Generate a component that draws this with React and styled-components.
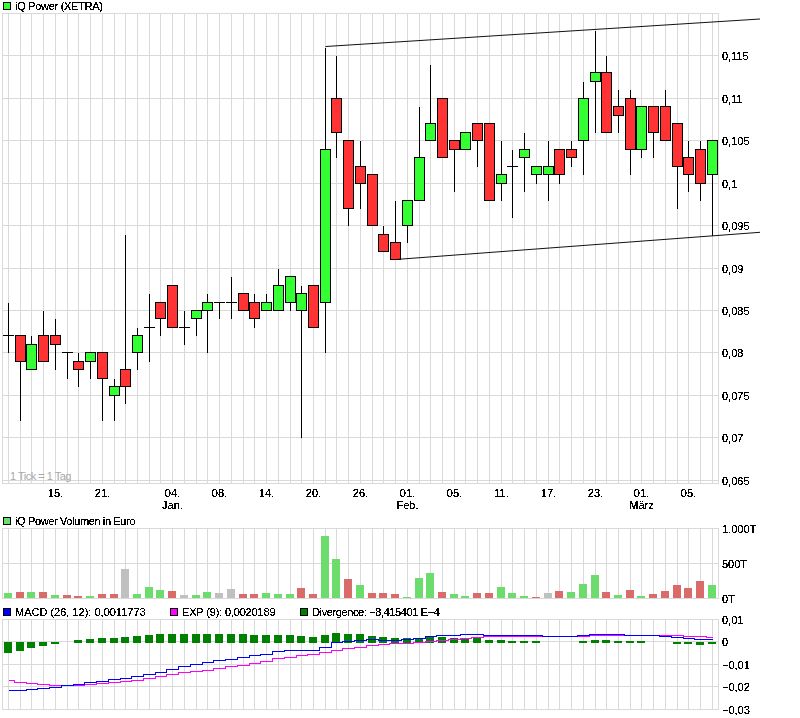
import React from 'react';
import styled, { createGlobalStyle } from 'styled-components';

const GlobalStyle = createGlobalStyle`
  html, body { margin: 0; padding: 0; background: #fff; }
`;

const Page = styled.div`
  width: 800px;
  height: 718px;
  display: flex;
  flex-direction: column;
  background: #fff;
  font-family: "Liberation Sans", Arial, sans-serif;
  font-size: 11px;
  color: #000;
  overflow: hidden;
`;

const Legend = styled.div`
  height: ${p => p.$height}px;
  padding-left: 3px;
  display: flex;
  align-items: flex-start;
  flex: none;
`;

const LegendItem = styled.div`
  display: flex;
  align-items: flex-start;
  width: ${p => (p.$width ? `${p.$width}px` : 'auto')};
  padding-top: ${p => p.$top}px;
  line-height: 10px;
  white-space: nowrap;
`;

const Swatch = styled.span`
  box-sizing: border-box;
  width: 8px;
  height: 8px;
  margin-right: 4px;
  border: 1px solid #000;
  background: ${p => p.$color};
  flex: none;
`;

const LegendText = styled.span`
  margin-top: -1px;
  letter-spacing: ${p => p.$spacing || 0}px;
  filter: url(#aliased);
`;

const Plot = styled.svg`
  display: block;
  flex: none;
  width: 800px;
  height: ${p => p.$height}px;
  overflow: visible;
`;

const Defs = styled.svg`
  position: absolute;
  width: 0;
  height: 0;
`;

const GridLine = styled.line`
  stroke: #d9d9d9;
  stroke-width: 1;
  shape-rendering: crispEdges;
`;

const Wick = styled.line`
  stroke: #000;
  stroke-width: 1;
  shape-rendering: crispEdges;
`;

const Body = styled.rect`
  fill: ${p => (p.$up ? '#33ff33' : '#ff3333')};
  stroke: #000;
  stroke-width: 1;
  shape-rendering: crispEdges;
`;

const ChannelLine = styled.line`
  stroke: #111;
  stroke-width: 1;
`;

const VolumeBar = styled.rect`
  fill: ${p => p.$color};
  shape-rendering: crispEdges;
`;

const DivergenceBar = styled.rect`
  fill: #008000;
  shape-rendering: crispEdges;
`;

const StepLine = styled.path`
  fill: none;
  stroke: ${p => p.$color};
  stroke-width: 1;
  shape-rendering: crispEdges;
`;

const AxisLabel = styled.text`
  font-family: "Liberation Sans", Arial, sans-serif;
  font-size: 11px;
  fill: #000;
  filter: url(#aliased);
`;

const Watermark = styled.text`
  font-family: "Liberation Sans", Arial, sans-serif;
  font-size: 11px;
  letter-spacing: -0.5px;
  fill: #a8a8a8;
`;

const count = 61;
const colX = i => Math.floor(8.5 + 11.73 * i) + 0.5;
const allX = Array.from({ length: count }, (_, i) => colX(i));
const priceY = p => Math.floor(55.8 + (115 - p) * 8.49) + 0.5;

// [high, top of body, bottom of body, low, up?]
const candles = [
  [86, 82, 82, 80, 0], [82, 82, 79, 72, 0], [82, 81, 78, 78, 1], [85, 82, 79, 79, 0], [84, 82, 81, 78, 0],
  [80, 80, 80, 77, 0], [80, 79, 78, 76, 0], [80, 80, 79, 77, 1], [80, 80, 77, 72, 0], [77, 76, 75, 72, 1],
  [94, 78, 76, 74, 0], [83, 82, 80, 78, 1], [87, 83, 83, 79, 0], [86, 86, 84, 82, 0], [88, 88, 83, 83, 0],
  [85, 83, 83, 81, 0], [85, 85, 84, 82, 1], [87, 86, 85, 80, 1], [86, 86, 86, 84, 0], [89, 86, 86, 84, 0],
  [87, 87, 85, 85, 0], [87, 86, 84, 83, 0], [87, 86, 85, 85, 1], [90, 88, 85, 85, 1], [89, 89, 86, 85, 1],
  [88, 87, 85, 70, 1], [88, 88, 83, 83, 0], [116, 104, 86, 80, 1], [115, 110, 106, 103, 0], [105, 105, 97, 95, 0],
  [105, 102, 100, 97, 0], [101, 101, 95, 95, 0], [95, 94, 92, 92, 0], [98, 93, 91, 91, 0], [98, 98, 95, 93, 1],
  [109, 103, 98, 98, 1], [114, 107, 105, 105, 1], [110, 110, 103, 103, 0], [105, 105, 104, 99, 0], [106, 106, 104, 104, 1],
  [107, 107, 105, 102, 0], [107, 107, 98, 98, 0], [105, 101, 100, 98, 1], [104, 102, 102, 96, 0], [106, 104, 103, 99, 1],
  [102, 102, 101, 100, 1], [105, 102, 101, 98, 1], [104, 104, 101, 100, 0], [105, 104, 103, 102, 0], [112, 110, 105, 101, 1],
  [118, 113, 112, 106, 1], [115, 113, 106, 106, 0], [111, 109, 108, 106, 0], [111, 110, 104, 101, 0], [109, 109, 104, 103, 1],
  [109, 109, 106, 103, 0], [111, 109, 105, 105, 0], [107, 107, 102, 97, 0], [105, 103, 101, 99, 0], [105, 104, 100, 98, 0],
  [105, 105, 101, 93.8, 1],
];

const V = { g: '#6cdc6c', r: '#d96b6b', y: '#c0c0c0' };
// top of each volume bar, in crop units (3 per pixel) above the 264 baseline
const volumes = [
  [249, 'g'], [246, 'r'], [246, 'g'], [246, 'r'], [255, 'g'], [255, 'r'], [258, 'r'], [258, 'g'], [252, 'r'], [252, 'r'],
  [177, 'y'], [252, 'g'], [231, 'g'], [240, 'g'], [243, 'r'], [255, 'y'], [255, 'g'], [246, 'g'], [249, 'y'], [237, 'y'],
  [252, 'r'], [252, 'r'], [249, 'g'], [252, 'g'], [252, 'g'], [234, 'r'], [252, 'r'], [78, 'g'], [147, 'g'], [207, 'r'],
  [225, 'g'], [249, 'r'], [249, 'r'], [252, 'r'], [261, 'g'], [204, 'g'], [189, 'g'], [246, 'r'], [252, 'g'], [258, 'g'],
  [249, 'r'], [249, 'r'], [231, 'g'], [249, 'g'], [258, 'g'], [261, 'r'], [249, 'y'], [243, 'r'], [246, 'g'], [222, 'g'],
  [195, 'g'], [246, 'r'], [255, 'g'], [240, 'r'], [258, 'g'], [252, 'r'], [243, 'r'], [225, 'r'], [234, 'r'], [213, 'r'],
  [225, 'g'],
];

// [top, bottom] in crop units; offset 510 + v / 3
const divergence = [
  [396, 429], [396, 423], [396, 414], [396, 408], [396, 402], null, [390, 399], [387, 399], [384, 399], [384, 399],
  [381, 399], [378, 399], [375, 399], [372, 399], [372, 399], [372, 399], [372, 399], [372, 399], [372, 399], [372, 399],
  [372, 399], [375, 399], [375, 399], [375, 399], [375, 399], [378, 399], [381, 399], [375, 399], [369, 399], [372, 399],
  [372, 399], [378, 399], [381, 399], [384, 399], [384, 399], [384, 399], [381, 399], [381, 399], [384, 399], [384, 399],
  [381, 399], [390, 399], [390, 399], [393, 399], [393, 399], [393, 399], null, null, null, [393, 399],
  [390, 399], [390, 399], [393, 399], [393, 399], [393, 399], null, null, [396, 402], [396, 402], [396, 405],
  [396, 402],
];

const macd = [
  541, 541, 538, 535, 532, 526, 523, 517, 514, 508, 505, 499, 493, 487, 478, 469, 463, 457, 451, 448, 442, 436, 432,
  424, 421, 421, 421, 412, 397, 394, 391, 388, 391, 391, 388, 385, 379, 376, 376, 373, 373, 377, 377, 377, 377, 376,
  379, 379, 379, 377, 373, 373, 373, 376, 376, 376, 379, 382, 385, 388, 388,
];
const signal = [
  511, 517, 520, 523, 526, 526, 526, 523, 520, 517, 514, 511, 505, 499, 493, 487, 484, 481, 475, 469, 466, 460, 454,
  445, 442, 436, 433, 427, 421, 415, 412, 406, 403, 400, 400, 397, 394, 391, 388, 385, 382, 379, 379, 379, 379, 379,
  379, 379, 379, 379, 376, 376, 376, 376, 376, 376, 376, 376, 379, 379, 382,
];

const cropY = v => Math.floor(510 + v / 3);

const stepPath = values => {
  let d = `M${colX(0)} ${cropY(values[0]) + 0.5}`;
  for (let i = 1; i < values.length; i++) {
    const mid = Math.floor((colX(i - 1) + colX(i)) / 2) + 0.5;
    d += `H${mid}V${cropY(values[i]) + 0.5}`;
  }
  return `${d}H${colX(values.length - 1)}`;
};

const priceLabels = [
  ['0,115', 115], ['0,11', 110], ['0,105', 105], ['0,1', 100], ['0,095', 95], ['0,09', 90],
  ['0,085', 85], ['0,08', 80], ['0,075', 75], ['0,07', 70], ['0,065', 65],
];
const dayLabels = [
  ['15.', 4], ['21.', 8], ['04.', 14], ['08.', 18], ['14.', 22], ['20.', 26], ['26.', 30],
  ['01.', 34], ['05.', 38], ['11.', 42], ['17.', 46], ['23.', 50], ['01.', 54], ['05.', 58],
];
const monthLabels = [['Jan.', 14], ['Feb.', 34], ['März', 54]];

const Frame = ({ top, bottom, lines }) => (
  <g>
    {[2.5, ...allX, 718.5].map(x => <GridLine key={x} x1={x} x2={x} y1={top} y2={bottom} />)}
    {lines.map(y => <GridLine key={y} x1={2} x2={719} y1={y} y2={y} />)}
  </g>
);

const PriceChart = () => (
  <Plot $height={503} viewBox="0 13 800 503">
    <Frame top={13} bottom={483.5} lines={[13.5, ...priceLabels.map(([, p]) => priceY(p)), 483.5]} />
    <Watermark x={10} y={480}>1 Tick = 1 Tag</Watermark>
    {candles.map(([h, t, b, l, up], i) => {
      const x = colX(i);
      const doji = t === b;
      return (
        <g key={i}>
          <Wick x1={x} x2={x} y1={priceY(h)} y2={priceY(l) + 0.5} />
          {doji
            ? <Wick x1={x - 5.5} x2={x + 5.5} y1={priceY(t)} y2={priceY(t)} />
            : <Body $up={!!up} x={x - 5} y={priceY(t)} width={10} height={priceY(b) - priceY(t)} />}
        </g>
      );
    })}
    <ChannelLine x1={325.5} y1={46.5} x2={760} y2={19} />
    <ChannelLine x1={395.5} y1={259.5} x2={760} y2={232.3} />
    {priceLabels.map(([t, p]) => (
      <AxisLabel key={t} x={722} y={priceY(p) + 4.5}>{t}</AxisLabel>
    ))}
    {dayLabels.map(([t, i]) => (
      <AxisLabel key={`${t}${i}`} x={colX(i)} y={497} textAnchor="middle">{t}</AxisLabel>
    ))}
    {monthLabels.map(([t, i]) => (
      <AxisLabel key={t} x={colX(i)} y={509} textAnchor="middle">{t}</AxisLabel>
    ))}
  </Plot>
);

const VolumeChart = () => (
  <Plot $height={78} viewBox="0 528 800 78">
    <Frame top={528} bottom={598.5} lines={[528.5, 563.5, 598.5]} />
    {volumes.map(([v, c], i) => {
      const h = Math.round((264 - v) / 3);
      return <VolumeBar key={i} $color={V[c]} x={colX(i) - 4.5} y={598 - h} width={8} height={h} />;
    })}
    <AxisLabel x={722} y={533}>1.000T</AxisLabel>
    <AxisLabel x={722} y={568}>500T</AxisLabel>
    <AxisLabel x={722} y={603}>0T</AxisLabel>
  </Plot>
);

const MacdChart = () => (
  <Plot $height={99} viewBox="0 619 800 99">
    <Frame top={619} bottom={709.5} lines={[619.5, 641.5, 664.5, 686.5, 709.5]} />
    {divergence.map((d, i) => d && (
      <DivergenceBar key={i} x={colX(i) - 4.5} y={cropY(d[0])} width={8} height={cropY(d[1]) - cropY(d[0])} />
    ))}
    <StepLine $color="#ff00ff" d={stepPath(signal)} />
    <StepLine $color="#0000ff" d={stepPath(macd)} />
    <AxisLabel x={722} y={624}>0,01</AxisLabel>
    <AxisLabel x={722} y={646}>0</AxisLabel>
    <AxisLabel x={722} y={669}>−0,01</AxisLabel>
    <AxisLabel x={722} y={691}>−0,02</AxisLabel>
    <AxisLabel x={722} y={714}>−0,03</AxisLabel>
  </Plot>
);

export default function App() {
  return (
    <Page>
      <GlobalStyle />
      <Defs aria-hidden="true">
        <filter id="aliased" x="-5%" y="-20%" width="110%" height="140%" colorInterpolationFilters="sRGB">
          <feComponentTransfer>
            <feFuncA type="discrete" tableValues="0 1 1" />
          </feComponentTransfer>
        </filter>
      </Defs>
      <Legend $height={13}>
        <LegendItem $top={2}>
          <Swatch $color="#33ff33" />
          <LegendText $spacing={-0.29}>iQ Power (XETRA)</LegendText>
        </LegendItem>
      </Legend>
      <PriceChart />
      <Legend $height={12}>
        <LegendItem $top={1}>
          <Swatch $color="#6cdc6c" />
          <LegendText $spacing={-0.37}>iQ Power Volumen in Euro</LegendText>
        </LegendItem>
      </Legend>
      <VolumeChart />
      <Legend $height={13}>
        <LegendItem $top={2} $width={167}>
          <Swatch $color="#0000ff" />
          <LegendText>MACD (26, 12): 0,0011773</LegendText>
        </LegendItem>
        <LegendItem $top={2} $width={130}>
          <Swatch $color="#ff00ff" />
          <LegendText $spacing={-0.17}>EXP (9): 0,0020189</LegendText>
        </LegendItem>
        <LegendItem $top={2}>
          <Swatch $color="#008000" />
          <LegendText $spacing={-0.38}>Divergence: −8,415401 E−4</LegendText>
        </LegendItem>
      </Legend>
      <MacdChart />
    </Page>
  );
}
